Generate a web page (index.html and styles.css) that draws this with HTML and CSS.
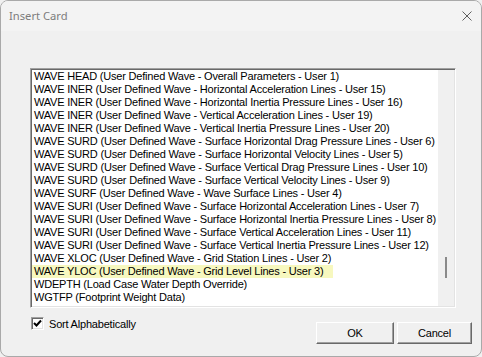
FILE: index.html
```html
<!DOCTYPE html>
<html>
<head>
<meta charset="utf-8">
<link rel="stylesheet" href="styles.css">
</head>
<body>
<div class="window">
  <div class="titlebar">
    <span class="title">Insert Card</span>
    <svg class="close" width="10" height="10" viewBox="0 0 10 10"><path d="M0.5 0.5 L9.5 9.5 M9.5 0.5 L0.5 9.5" stroke="#5f5f5f" stroke-width="1" fill="none"/></svg>
  </div>
  <div class="content">
    <div class="listbox">
      <ul class="items">
        <li>WAVE HEAD (User Defined Wave - Overall Parameters - User 1)</li>
        <li>WAVE INER (User Defined Wave - Horizontal Acceleration Lines - User 15)</li>
        <li>WAVE INER (User Defined Wave - Horizontal Inertia Pressure Lines - User 16)</li>
        <li>WAVE INER (User Defined Wave - Vertical Acceleration Lines - User 19)</li>
        <li>WAVE INER (User Defined Wave - Vertical Inertia Pressure Lines - User 20)</li>
        <li>WAVE SURD (User Defined Wave - Surface Horizontal Drag Pressure Lines - User 6)</li>
        <li>WAVE SURD (User Defined Wave - Surface Horizontal Velocity Lines - User 5)</li>
        <li>WAVE SURD (User Defined Wave - Surface Vertical Drag Pressure Lines - User 10)</li>
        <li>WAVE SURD (User Defined Wave - Surface Vertical Velocity Lines - User 9)</li>
        <li>WAVE SURF (User Defined Wave - Wave Surface Lines - User 4)</li>
        <li>WAVE SURI (User Defined Wave - Surface Horizontal Acceleration Lines - User 7)</li>
        <li>WAVE SURI (User Defined Wave - Surface Horizontal Inertia Pressure Lines - User 8)</li>
        <li>WAVE SURI (User Defined Wave - Surface Vertical Acceleration Lines - User 11)</li>
        <li>WAVE SURI (User Defined Wave - Surface Vertical Inertia Pressure Lines - User 12)</li>
        <li>WAVE XLOC (User Defined Wave - Grid Station Lines - User 2)</li>
        <li class="hl"><span>WAVE YLOC (User Defined Wave - Grid Level Lines - User 3)</span></li>
        <li>WDEPTH (Load Case Water Depth Override)</li>
        <li>WGTFP (Footprint Weight Data)</li>
        <li>WIND (Wind Load Data - Wind Direction and Speed)</li>
      </ul>
      <div class="scrollbar"><div class="thumb"></div></div>
    </div>
    <div class="bottom">
      <label class="check">
        <span class="box"><svg width="9" height="9" viewBox="0 0 9 9"><path d="M1 4 L3.5 6.5 L8 1.5" stroke="#000" stroke-width="2" fill="none"/></svg></span>
        <span>Sort Alphabetically</span>
      </label>
      <div class="buttons">
        <button class="btn ok">OK</button>
        <button class="btn cancel">Cancel</button>
      </div>
    </div>
  </div>
</div>
</body>
</html>
```
FILE: styles.css
```css
html, body {
  margin: 0;
  padding: 0;
  background: #f0f0f0;
}
body {
  font-family: "Liberation Sans", Arial, sans-serif;
  font-size: 11px;
  letter-spacing: -0.2px;
  color: #000;
}
.window {
  width: 482px;
  height: 357px;
  box-sizing: border-box;
  border: 1px solid #a9a9a9;
  border-radius: 8px;
  background: #f0f0f0;
  overflow: hidden;
  display: flex;
  flex-direction: column;
}
.titlebar {
  height: 30px;
  flex: none;
  background: #f3f3f3;
  display: flex;
  align-items: center;
  justify-content: space-between;
  padding: 0 9px 0 8px;
}
.title {
  font-family: "Noto Sans", "Liberation Sans", sans-serif;
  font-size: 11.2px;
  letter-spacing: 0;
  color: #7c7c7c;
  margin-top: -1px;
}
.close {
  display: block;
  margin-top: -1px;
}
.content {
  padding: 37px 9px 0 29px;
  display: flex;
  flex-direction: column;
}
.listbox {
  width: 426px;
  height: 240px;
  box-sizing: border-box;
  border-top: 1px solid #a0a0a0;
  border-left: 1px solid #a0a0a0;
  border-bottom: 1px solid #ffffff;
  border-right: 1px solid #ffffff;
  padding: 1px;
  box-shadow: inset 1px 1px 0 #696969, inset -1px -1px 0 #e3e3e3;
  display: flex;
  overflow: hidden;
}
.items {
  list-style: none;
  margin: 0;
  padding: 0;
  flex: 1;
  background: #fff;
  overflow: hidden;
  min-width: 0;
}
.items li {
  height: 13px;
  line-height: 13px;
  white-space: nowrap;
  padding-left: 2px;
}
.items li.hl {
  padding-left: 0;
}
.items li.hl span {
  display: inline-block;
  background: #f7f8bf;
  padding: 0 10px 0 2px;
}
.scrollbar {
  width: 16px;
  flex: none;
  background: #f0f0f0;
  position: relative;
}
.thumb {
  position: absolute;
  left: 7px;
  top: 187px;
  width: 2px;
  height: 21px;
  background: #8a8a8a;
}
.bottom {
  display: flex;
  justify-content: space-between;
  align-items: flex-start;
}
.check {
  display: flex;
  align-items: center;
  gap: 5px;
  margin-top: 9px;
  margin-left: 1px;
  height: 13px;
}
.box {
  width: 13px;
  height: 13px;
  box-sizing: border-box;
  background: #fff;
  border-top: 1px solid #a0a0a0;
  border-left: 1px solid #a0a0a0;
  border-bottom: 1px solid #fff;
  border-right: 1px solid #fff;
  box-shadow: inset 1px 1px 0 #696969, inset -1px -1px 0 #e3e3e3;
  display: flex;
  align-items: center;
  justify-content: center;
}
.box svg {
  display: block;
}
.buttons {
  display: flex;
  gap: 3px;
  margin-top: 14px;
}
.btn {
  height: 22px;
  box-sizing: border-box;
  font-family: "Liberation Sans", Arial, sans-serif;
  font-size: 11px;
  letter-spacing: -0.2px;
  color: #000;
  background: #f0f0f0;
  border-top: 1px solid #fff;
  border-left: 1px solid #fff;
  border-bottom: 1px solid #696969;
  border-right: 1px solid #696969;
  box-shadow: inset -1px -1px 0 #a0a0a0;
  padding: 0;
  margin: 0;
}
.ok { width: 78px; }
.cancel { width: 75px; }
```
